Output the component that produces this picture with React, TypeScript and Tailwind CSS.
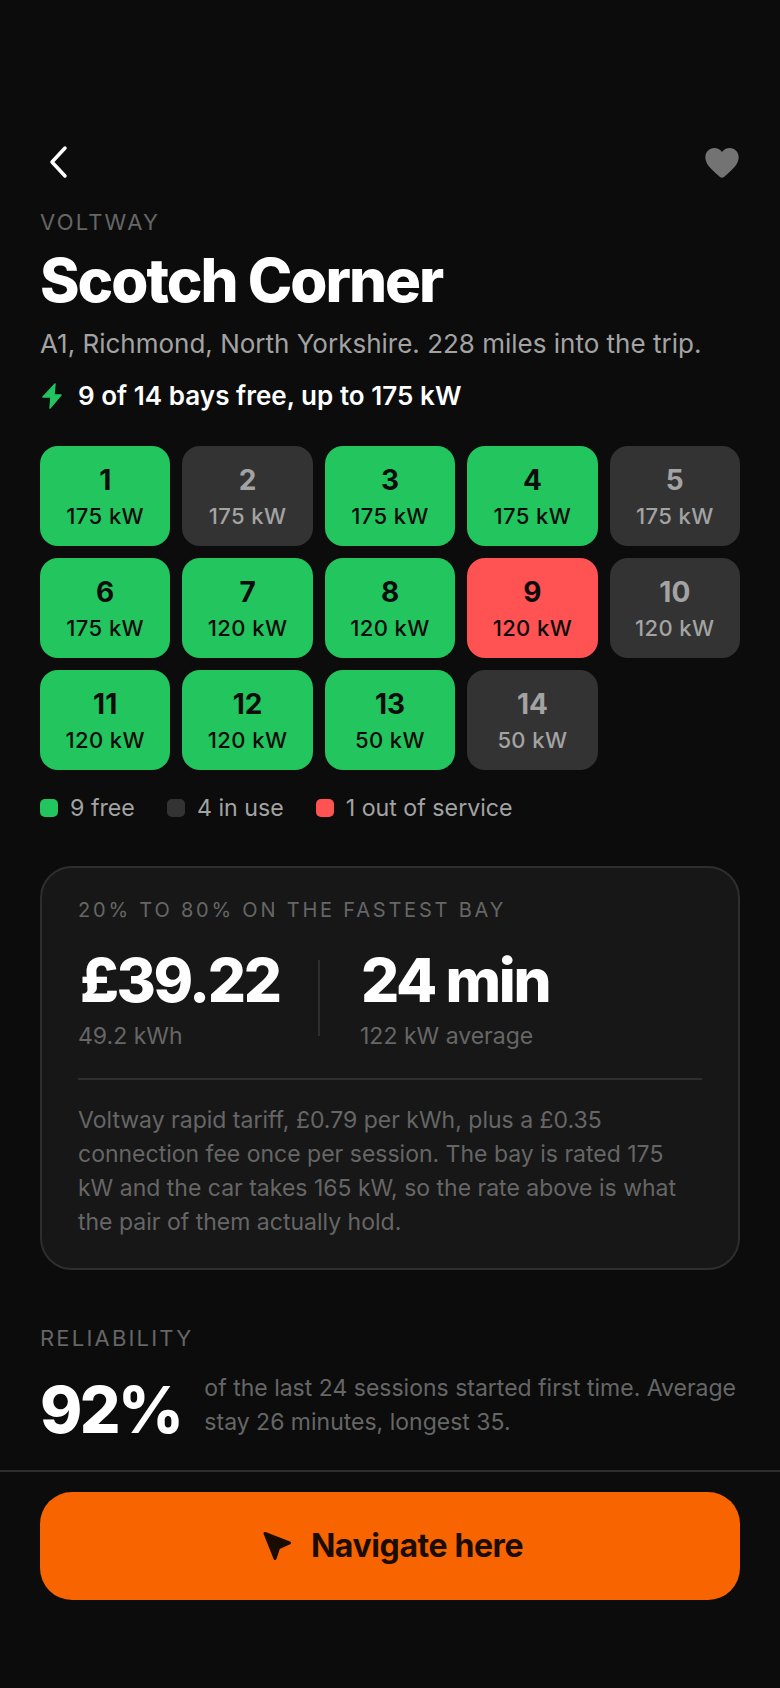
import React from "react";

const bays: [string, string, "f" | "u" | "x"][] = [
  ["1", "175 kW", "f"], ["2", "175 kW", "u"], ["3", "175 kW", "f"], ["4", "175 kW", "f"], ["5", "175 kW", "u"],
  ["6", "175 kW", "f"], ["7", "120 kW", "f"], ["8", "120 kW", "f"], ["9", "120 kW", "x"], ["10", "120 kW", "u"],
  ["11", "120 kW", "f"], ["12", "120 kW", "f"], ["13", "50 kW", "f"], ["14", "50 kW", "u"],
];

const Bay = ({ n, kw, s }: { n: string; kw: string; s: "f" | "u" | "x" }) => (
  <div
    className={
      "h-[100px] rounded-[18px] flex flex-col items-center justify-center " +
      (s === "f" ? "bg-[#22c55e] text-[#0c0c0c]" : s === "x" ? "bg-[#ff5252] text-[#0c0c0c]" : "bg-[#333333] text-[#a3a3a3]")
    }
  >
    <div className="text-[28px] leading-[36px] font-bold">{n}</div>
    <div className="text-[22px] leading-[28px] font-medium tracking-[0.4px] mt-[4px]">{kw}</div>
  </div>
);

const Legend = ({ c, t }: { c: string; t: string }) => (
  <div className="flex items-center gap-[12px]">
    <span className={"w-[18px] h-[18px] rounded-[5px] " + c} />
    <span className="text-[23.2px] leading-[32px] text-[#a3a3a3]">{t}</span>
  </div>
);

export default function App() {
  return (
    <div className="w-[780px] h-[1688px] bg-[#0c0c0c] flex flex-col overflow-hidden font-['Inter',sans-serif]">
      <div className="flex-1 px-[40px] pt-[140px]">
        <div className="flex items-center justify-between h-[44px]">
          <svg width="44" height="44" viewBox="0 0 44 44" fill="none" className="-ml-[2px]">
            <path d="M27 8 L14 22 L27 36" stroke="#fff" strokeWidth="3.5" strokeLinecap="round" strokeLinejoin="round" />
          </svg>
          <svg width="40" height="40" viewBox="0 0 24 24" className="mr-[-2px]">
            <path d="M12 21.5 C11.6 21.5 11.2 21.3 10.8 21 C5 16.2 2 13 2 9.2 C2 6 4.4 3.6 7.4 3.6 C9.2 3.6 10.9 4.5 12 6 C13.1 4.5 14.8 3.6 16.6 3.6 C19.6 3.6 22 6 22 9.2 C22 13 19 16.2 13.2 21 C12.8 21.3 12.4 21.5 12 21.5 Z" fill="#737373" />
          </svg>
        </div>
        <div className="mt-[24px] text-[22px] leading-[28px] tracking-[2.2px] text-[#666666]">VOLTWAY</div>
        <h1 className="mt-[12px] text-[60px] leading-[64px] font-extrabold tracking-[-2px] text-white">Scotch Corner</h1>
        <p className="mt-[14px] text-[26px] leading-[36px] text-[#a3a3a3]">A1, Richmond, North Yorkshire. 228 miles into the trip.</p>
        <div className="mt-[16px] flex items-center gap-[13px] h-[36px]">
          <svg width="24" height="28" viewBox="0 0 24 28" className="ml-[1px]">
            <path d="M14 2 L2 15 H10 L9 26 L20 13 H13 Z" fill="#22c55e" stroke="#22c55e" strokeWidth="1.5" strokeLinejoin="round" />
          </svg>
          <span className="text-[26px] leading-[36px] font-semibold tracking-[0.03px] text-white">9 of 14 bays free, up to 175 kW</span>
        </div>

        <div className="mt-[32px] grid grid-cols-5 gap-[12px]">
          {bays.map(([n, kw, s]) => (
            <Bay key={n} n={n} kw={kw} s={s} />
          ))}
        </div>

        <div className="mt-[22px] flex items-center gap-[32px]">
          <Legend c="bg-[#22c55e]" t="9 free" />
          <Legend c="bg-[#333333]" t="4 in use" />
          <Legend c="bg-[#ff5252]" t="1 out of service" />
        </div>

        <div className="mt-[42px] rounded-[32px] border-2 border-[#2e2e2e] bg-[#171717] px-[36px] pt-[28px] pb-[29px]">
          <div className="text-[20px] leading-[28px] tracking-[2.8px] text-[#666666]">20% TO 80% ON THE FASTEST BAY</div>
          <div className="mt-[20px] flex">
            <div className="w-[240px]">
              <div className="ml-[2px] text-[60px] leading-[72px] font-extrabold tracking-[-2.4px] text-white">£39.22</div>
              <div className="mt-[4px] text-[23px] leading-[32px] text-[#666666]">49.2 kWh</div>
            </div>
            <div className="w-[2px] h-[76px] self-end mb-[16px] bg-[#2e2e2e]" />
            <div className="ml-[40px]">
              <div className="ml-[1px] text-[60px] leading-[72px] font-extrabold tracking-[-2.4px] text-white">24 min</div>
              <div className="mt-[4px] text-[23px] leading-[32px] text-[#666666]">122 kW average</div>
            </div>
          </div>
          <div className="mt-[26px] h-[2px] bg-[#2e2e2e]" />
          <p className="mt-[23px] text-[23px] leading-[34px] text-[#666666]">
            Voltway rapid tariff, £0.79 per kWh, plus a £0.35 connection fee once per session. The bay is rated 175 kW and the car takes 165 kW, so the rate above is what the pair of them actually hold.
          </p>
        </div>

        <div className="mt-[54px] text-[22px] leading-[28px] tracking-[2.2px] text-[#666666]">RELIABILITY</div>
        <div className="mt-[8px] flex items-center gap-[23px]">
          <div className="pt-[10px] text-[64px] leading-[80px] font-extrabold tracking-[-2.56px] text-white">92%</div>
          <p className="text-[23px] leading-[34.5px] text-[#666666]">of the last 24 sessions started first time. Average stay 26 minutes, longest 35.</p>
        </div>
      </div>
      <div className="border-t-2 border-[#2e2e2e] px-[40px] pt-[20px] pb-[88px]">
        <div className="h-[108px] pl-[5px] rounded-[32px] bg-[#f76400] flex items-center justify-center gap-[17px] text-[#1a0d00]">
          <svg width="32" height="32" viewBox="0 0 32 32">
            <path d="M3 3.5 L27.5 13 L16.5 18 L13 28.5 Z" fill="#1a0d00" stroke="#1a0d00" strokeWidth="3" strokeLinejoin="round" />
          </svg>
          <span className="text-[32px] leading-[40px] font-bold tracking-[-0.4px]">Navigate here</span>
        </div>
      </div>
    </div>
  );
}
